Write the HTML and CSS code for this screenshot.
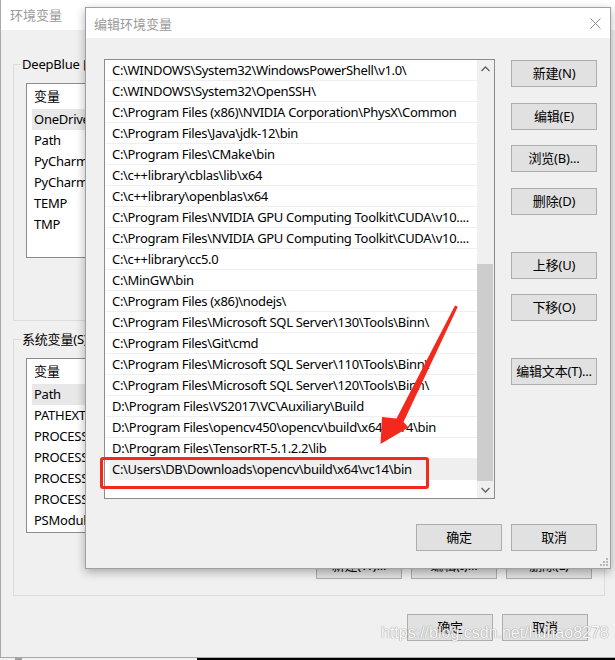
FILE: index.html
```html
<!DOCTYPE html>
<html lang="zh-CN">
<head>
<meta charset="utf-8">
<title>编辑环境变量</title>
<link rel="stylesheet" href="styles.css">
</head>
<body>
<div class="bgwin">
  <div class="bg-title">环境变量</div>
  <div class="bg-body">
    <fieldset class="group">
      <legend>DeepBlue 的用户变量(U)</legend>
      <div class="group-inner">
        <div class="listbox">
          <div class="lv-header">变量</div>
          <div class="lv-row sel">OneDrive</div>
          <div class="lv-row">Path</div>
          <div class="lv-row">PyCharm</div>
          <div class="lv-row">PyCharm Community Edition</div>
          <div class="lv-row">TEMP</div>
          <div class="lv-row">TMP</div>
        </div>
        <div class="btn-row">
          <button class="btn">新建(N)...</button>
          <button class="btn">编辑(E)...</button>
          <button class="btn">删除(D)</button>
        </div>
      </div>
    </fieldset>
    <fieldset class="group group2">
      <legend>系统变量(S)</legend>
      <div class="group-inner">
        <div class="listbox">
          <div class="lv-header">变量</div>
          <div class="lv-row sel">Path</div>
          <div class="lv-row">PATHEXT</div>
          <div class="lv-row">PROCESSOR_ARCHITECTURE</div>
          <div class="lv-row">PROCESSOR_IDENTIFIER</div>
          <div class="lv-row">PROCESSOR_LEVEL</div>
          <div class="lv-row">PROCESSOR_REVISION</div>
          <div class="lv-row">PSModulePath</div>
        </div>
        <div class="btn-row">
          <button class="btn hidden-btn">新建(W)...</button>
          <button class="btn hidden-btn">编辑(I)...</button>
          <button class="btn hidden-btn">删除(L)</button>
        </div>
      </div>
    </fieldset>
    <div class="bg-footer">
      <button class="btn">确定</button>
      <button class="btn">取消</button>
    </div>
  </div>
</div>
<div class="taskbar"><div class="tb-left"><span class="tb-mark"></span></div></div>

<div class="dialog">
  <div class="dlg-title">
    <span>编辑环境变量</span>
    <svg class="close" width="11" height="11" viewBox="0 0 11 11"><path d="M0.5 0.5L10.5 10.5M10.5 0.5L0.5 10.5" stroke="#8a8a8a" stroke-width="1" fill="none"/></svg>
  </div>
  <div class="dlg-body">
    <div class="dlg-main">
      <div class="pathlist">
        <div class="rows">
          <div class="prow">C:\WINDOWS\System32\WindowsPowerShell\v1.0\</div>
          <div class="prow">C:\WINDOWS\System32\OpenSSH\</div>
          <div class="prow">C:\Program Files (x86)\NVIDIA Corporation\PhysX\Common</div>
          <div class="prow">C:\Program Files\Java\jdk-12\bin</div>
          <div class="prow">C:\Program Files\CMake\bin</div>
          <div class="prow">C:\c++library\cblas\lib\x64</div>
          <div class="prow">C:\c++library\openblas\x64</div>
          <div class="prow">C:\Program Files\NVIDIA GPU Computing Toolkit\CUDA\v10....</div>
          <div class="prow">C:\Program Files\NVIDIA GPU Computing Toolkit\CUDA\v10....</div>
          <div class="prow">C:\c++library\cc5.0</div>
          <div class="prow">C:\MinGW\bin</div>
          <div class="prow">C:\Program Files (x86)\nodejs\</div>
          <div class="prow">C:\Program Files\Microsoft SQL Server\130\Tools\Binn\</div>
          <div class="prow">C:\Program Files\Git\cmd</div>
          <div class="prow">C:\Program Files\Microsoft SQL Server\110\Tools\Binn\</div>
          <div class="prow">C:\Program Files\Microsoft SQL Server\120\Tools\Binn\</div>
          <div class="prow">D:\Program Files\VS2017\VC\Auxiliary\Build</div>
          <div class="prow">D:\Program Files\opencv450\opencv\build\x64\vc14\bin</div>
          <div class="prow">D:\Program Files\TensorRT-5.1.2.2\lib</div>
          <div class="prow sel">C:\Users\DB\Downloads\opencv\build\x64\vc14\bin</div>
        </div>
        <div class="vscroll">
          <div class="sb-btn"><svg width="17" height="17" viewBox="0 0 17 17"><path d="M4.5 11L8.5 7L12.5 11" stroke="#606060" stroke-width="1.3" fill="none"/></svg></div>
          <div class="sb-track"><div class="sb-thumb"></div></div>
          <div class="sb-btn"><svg width="17" height="17" viewBox="0 0 17 17"><path d="M4.5 7L8.5 11L12.5 7" stroke="#606060" stroke-width="1.3" fill="none"/></svg></div>
        </div>
      </div>
      <div class="side-btns">
        <button class="btn">新建(N)</button>
        <button class="btn">编辑(E)</button>
        <button class="btn">浏览(B)...</button>
        <button class="btn">删除(D)</button>
        <button class="btn sep">上移(U)</button>
        <button class="btn">下移(O)</button>
        <button class="btn sep">编辑文本(T)...</button>
      </div>
    </div>
    <div class="dlg-footer">
      <button class="btn">确定</button>
      <button class="btn">取消</button>
    </div>
  </div>
  <svg class="grip" width="9" height="9" viewBox="0 0 9 9">
    <rect x="6" y="0" width="2" height="2" fill="#b8b8b8"/>
    <rect x="3" y="3" width="2" height="2" fill="#b8b8b8"/>
    <rect x="6" y="3" width="2" height="2" fill="#b8b8b8"/>
    <rect x="0" y="6" width="2" height="2" fill="#b8b8b8"/>
    <rect x="3" y="6" width="2" height="2" fill="#b8b8b8"/>
    <rect x="6" y="6" width="2" height="2" fill="#b8b8b8"/>
  </svg>
</div>

<div class="redbox"></div>
<svg class="arrow" width="615" height="660" viewBox="0 0 615 660">
  <polygon points="455,305.5 457.8,306.8 403.5,422 408.5,427.5 380.5,444 382,417 396.5,418.5" fill="#f3291d"/>
</svg>
<div class="watermark">https://blog.csdn.net/huhao8278</div>
</body>
</html>
```
FILE: styles.css
```css
* { box-sizing: border-box; }
html, body { margin: 0; padding: 0; }
body {
  width: 615px;
  height: 660px;
  overflow: hidden;
  position: relative;
  background: #000;
  font-family: "Noto Sans", "Noto Sans CJK SC", sans-serif;
  font-size: 13px;
  color: #000;
}
.btn {
  width: 86px;
  height: 27px;
  background: #e1e1e1;
  border: 1px solid #adadad;
  font-family: "Noto Sans", "Noto Sans CJK SC", sans-serif;
  font-size: 13px;
  color: #000;
  padding: 0;
  margin: 0;
  line-height: 25px;
  white-space: nowrap;
  letter-spacing: -0.2px;
}
.hidden-btn { padding-bottom: 6px; }

/* background window */
.bgwin {
  width: 615px;
  height: 658px;
  background: #f0f0f0;
  border-left: 1px solid #a8a8a8;
  border-bottom: 1px solid #a8a8a8;
  display: flex;
  flex-direction: column;
}
.bg-title {
  height: 30px;
  background: #fff;
  padding-left: 9px;
  line-height: 30px;
  color: #9a9a9a;
  font-size: 13px;
  flex: none;
}
.bg-body {
  padding: 0 10px 0 12px;
}
.group {
  margin: 24px 0 0;
  padding: 0;
  border: 1px solid #dcdcdc;
  min-width: 0;
}
.group2 { margin-top: 8px; }
.group legend {
  margin-left: 7px;
  padding: 0 1px;
  line-height: 20px;
  height: 20px;
  letter-spacing: -0.2px;
}
.group-inner {
  padding: 9px 12px 16px 12px;
}
.listbox {
  height: 175px;
  width: 560px;
  background: #fff;
  border: 1px solid #8c8c8c;
  overflow: hidden;
}
.lv-header {
  height: 25px;
  line-height: 25px;
  padding-left: 7px;
}
.lv-row {
  height: 21px;
  line-height: 21px;
  margin-left: 5px;
  padding-left: 2px;
  white-space: nowrap;
  letter-spacing: -0.25px;
}
.lv-row.sel { background: #e8e8e8; }
.btn-row {
  display: flex;
  justify-content: flex-end;
  gap: 9px;
  margin-top: 19px;
}
.bg-footer {
  display: flex;
  justify-content: flex-end;
  gap: 9px;
  margin-top: 18px;
  padding-right: 17px;
}
.taskbar {
  height: 2px;
  display: flex;
}
.tb-left {
  width: 197px;
  background: #f0f0f0;
  padding-left: 15px;
}
.tb-mark {
  display: block;
  width: 7px;
  height: 2px;
  background: #a0a0a0;
}

/* dialog */
.dialog {
  position: absolute;
  left: 85px;
  top: 7px;
  width: 526px;
  height: 562px;
  background: #f0f0f0;
  border: 1px solid #a0a0a0;
  box-shadow: 0 3px 9px rgba(0, 0, 0, 0.3);
  display: flex;
  flex-direction: column;
}
.dlg-title {
  height: 30px;
  flex: none;
  background: #fff;
  display: flex;
  align-items: center;
  justify-content: space-between;
  padding: 0 9px 0 8px;
  color: #9a9a9a;
  font-size: 13px;
}
.close { display: block; margin-top: 1px; }
.dlg-body {
  padding: 21px 13px 0 18px;
  display: flex;
  flex-direction: column;
}
.dlg-main {
  display: flex;
  gap: 16px;
  align-items: flex-start;
}
.pathlist {
  width: 391px;
  height: 440px;
  background: #fff;
  border: 1px solid #8c8c8c;
  display: flex;
}
.rows {
  flex: 1;
  min-width: 0;
  overflow: hidden;
}
.prow {
  height: 21px;
  line-height: 20px;
  margin-left: 1px;
  padding-left: 6px;
  border-bottom: 1px solid #efefef;
  white-space: nowrap;
  letter-spacing: -0.32px;
}
.prow.sel {
  background: linear-gradient(to right, transparent 4px, #efefef 4px);
  border-bottom-color: transparent;
}
.vscroll {
  width: 17px;
  flex: none;
  background: #f0f0f0;
  display: flex;
  flex-direction: column;
}
.sb-btn { height: 17px; flex: none; }
.sb-btn svg { display: block; }
.sb-track {
  flex: 1;
  padding-top: 187px;
}
.sb-thumb {
  height: 217px;
  margin: 0 1px 0 0;
  background: #cdcdcd;
}
.side-btns {
  display: flex;
  flex-direction: column;
  gap: 15.7px;
  margin-top: 1px;
}
.side-btns .sep { margin-top: 21px; }
.dlg-footer {
  display: flex;
  justify-content: flex-end;
  gap: 9px;
  margin-top: 25px;
}
.grip {
  position: absolute;
  right: 1px;
  bottom: 1px;
}

/* overlays */
.redbox {
  position: absolute;
  left: 100px;
  top: 457px;
  width: 329px;
  height: 32px;
  border: 3px solid #f3291d;
  border-radius: 3px;
}
.arrow {
  position: absolute;
  left: 0;
  top: 0;
}
.watermark {
  position: absolute;
  left: 381px;
  top: 622px;
  font-family: "Liberation Sans", Arial, sans-serif;
  font-size: 16px;
  line-height: 22px;
  color: #fff;
  opacity: 0.85;
  text-shadow: 0 0 1px #8a8a8a, 0 0 1px #8a8a8a;
  white-space: nowrap;
}
```
